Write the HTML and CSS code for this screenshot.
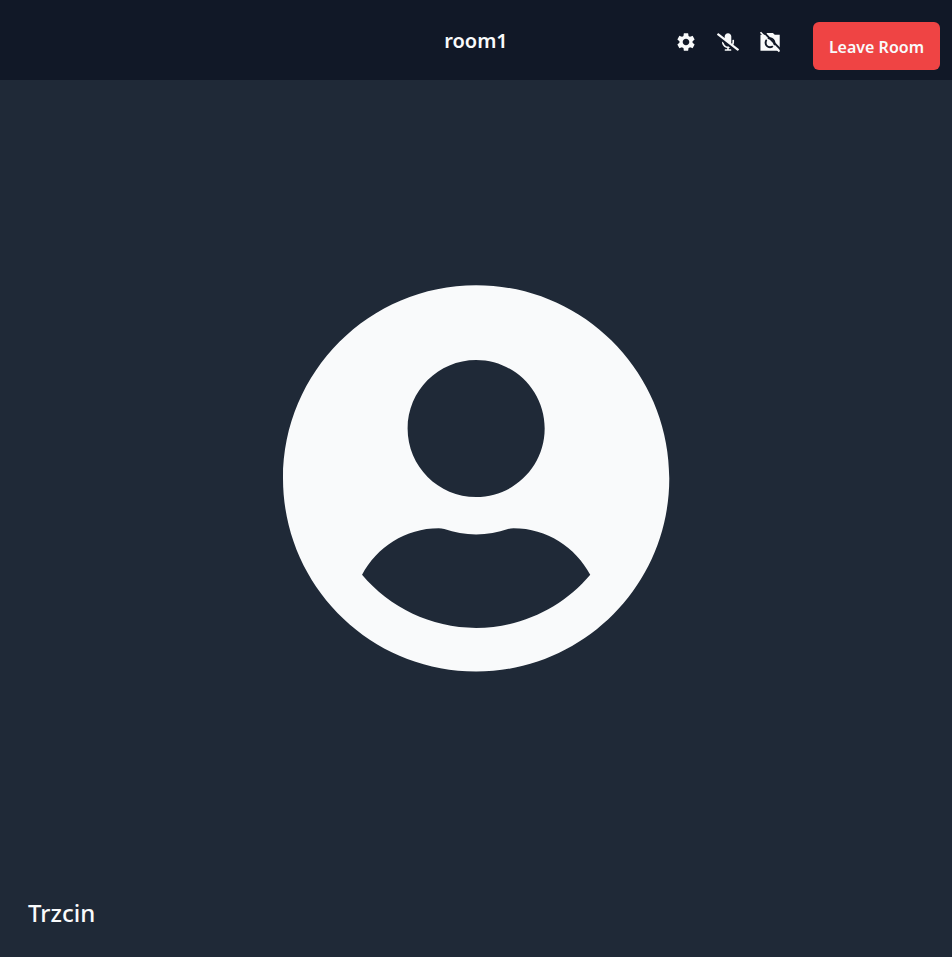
FILE: index.html
```html
<!DOCTYPE html>
<html lang="en">
<head>
<meta charset="utf-8">
<title>room1</title>
<link rel="stylesheet" href="styles.css">
</head>
<body>
<header class="topbar">
  <h1 class="room-name">room1</h1>
  <div class="controls">
    <button class="icon-button" type="button" aria-label="Settings">
      <svg class="icon" viewBox="0 0 24 24"><path d="M19.14 12.94c.04-.3.06-.61.06-.94 0-.32-.02-.64-.07-.94l2.03-1.58a.49.49 0 0 0 .12-.61l-1.92-3.32a.488.488 0 0 0-.59-.22l-2.39.96c-.5-.38-1.03-.7-1.62-.94l-.36-2.54a.484.484 0 0 0-.48-.41h-3.84c-.24 0-.43.17-.47.41l-.36 2.54c-.59.24-1.13.57-1.62.94l-2.39-.96c-.22-.08-.47 0-.59.22L2.74 8.87c-.12.21-.08.47.12.61l2.03 1.58c-.05.3-.09.63-.09.94s.02.64.07.94l-2.03 1.58a.49.49 0 0 0-.12.61l1.92 3.32c.12.22.37.29.59.22l2.39-.96c.5.38 1.03.7 1.62.94l.36 2.54c.05.24.24.41.48.41h3.84c.24 0 .44-.17.47-.41l.36-2.54c.59-.24 1.13-.56 1.62-.94l2.39.96c.22.08.47 0 .59-.22l1.92-3.32c.12-.22.07-.47-.12-.61l-2.01-1.58zM12 15.6c-1.98 0-3.6-1.62-3.6-3.6s1.62-3.6 3.6-3.6 3.6 1.62 3.6 3.6-1.62 3.6-3.6 3.6z"/></svg>
    </button>
    <button class="icon-button" type="button" aria-label="Unmute microphone">
      <svg class="icon" viewBox="0 0 640 512"><path d="M633.82 458.1l-157.8-121.96C488.61 312.13 496 285.01 496 256v-48c0-8.84-7.16-16-16-16h-16c-8.84 0-16 7.16-16 16v48c0 17.92-3.96 34.8-10.72 50.2l-26.55-20.52c3.1-9.4 5.28-19.22 5.28-29.67V96c0-53.02-42.98-96-96-96s-96 42.98-96 96v45.36L45.47 3.37C38.49-2.05 28.43-.8 23.01 6.18L3.37 31.45C-2.05 38.42-.8 48.47 6.18 53.9l588.36 454.73c6.98 5.43 17.03 4.17 22.46-2.81l19.64-25.27c5.41-6.97 4.16-17.02-2.82-22.45zM400 464h-56v-33.77c11.66-1.6 22.85-4.54 33.67-8.31l-50.11-38.73c-6.71.4-13.41.87-20.35.2-55.85-5.45-98.74-48.63-111.18-101.85L144 241.31v6.85c0 89.64 63.97 169.55 152 181.69V464h-56c-8.84 0-16 7.16-16 16v16c0 8.84 7.16 16 16 16h160c8.84 0 16-7.16 16-16v-16c0-8.84-7.16-16-16-16z"/></svg>
    </button>
    <button class="icon-button" type="button" aria-label="Turn camera on">
      <svg class="icon" viewBox="0 0 24 24">
        <mask id="camera-cut" maskUnits="userSpaceOnUse" x="0" y="0" width="24" height="24">
          <rect width="24" height="24" fill="#fff"/>
          <circle cx="12" cy="12.800" r="4.800" fill="none" stroke="#000" stroke-width="2.200"/>
          <path d="M3.500-.5l21 21.600" stroke="#000" stroke-width="2"/>
        </mask>
        <path mask="url(#camera-cut)" d="M1.600 4h5.200l2-1.700h6.400l2 1.700h5.400v17.500h-21z"/>
        <path d="M1 2l1.300-1.200 20.600 21.100-1.300 1.200z"/>
      </svg>
    </button>
  </div>
  <button class="leave" type="button">Leave Room</button>
</header>
<main class="tile">
  <svg class="avatar" viewBox="0 0 496 512" aria-hidden="true"><path d="M248 8C111 8 0 119 0 256s111 248 248 248 248-111 248-248S385 8 248 8zm0 96c48.600 0 88 39.400 88 88s-39.400 88-88 88-88-39.400-88-88 39.400-88 88-88zm0 344c-58.700 0-111.300-26.600-146.500-68.200 18.800-35.400 55.600-59.800 98.500-59.800 2.400 0 4.800.4 7.100 1.100 13 4.200 26.600 6.900 40.900 6.900s28-2.700 40.900-6.900c2.300-.7 4.700-1.100 7.100-1.100 42.900 0 79.700 24.400 98.500 59.800C359.300 421.400 306.700 448 248 448z"/></svg>
  <p class="participant">Trzcin</p>
</main>
</body>
</html>
```

FILE: styles.css
```css
* {
  box-sizing: border-box;
}

body {
  margin: 0;
  min-height: 100vh;
  display: grid;
  background: #1f2937;
  color: #f9fafb;
  font-family: "Noto Sans", sans-serif;
}

/* The bar overlays the top of the video tile. */
.topbar {
  position: absolute;
  top: 0;
  left: 0;
  right: 0;
  height: 80px;
  display: grid;
  grid-template-columns: 1fr auto 1fr;
  align-items: center;
  padding: 2px 12px 0;
  background: #111827;
}

.room-name {
  grid-column: 2;
  margin: 0;
  font-size: 20px;
  line-height: 28px;
  font-weight: 600;
}

.controls {
  grid-area: 1 / 3;
  justify-self: end;
  display: flex;
  gap: 20px;
  margin: 2px 159px 0 0;
}

.leave {
  grid-area: 1 / 3;
  justify-self: end;
  margin-top: 10px;
  padding: 13px 16px 11px;
  border: 0;
  border-radius: 6px;
  background: #ef4444;
  color: inherit;
  font: 600 16px/24px "Noto Sans", sans-serif;
}

.icon-button {
  display: flex;
  padding: 0;
  border: 0;
  background: none;
  color: inherit;
}

.icon {
  width: 22px;
  height: 22px;
  fill: currentColor;
}

.tile {
  position: relative;
  display: grid;
  place-items: center;
}

.avatar {
  height: calc(100vh * 5 / 12);
  overflow: visible;
  fill: #f9fafb;
}

.participant {
  position: absolute;
  left: 28px;
  bottom: 28px;
  margin: 0;
  font-size: 24px;
  line-height: 32px;
  font-weight: 500;
}
```
